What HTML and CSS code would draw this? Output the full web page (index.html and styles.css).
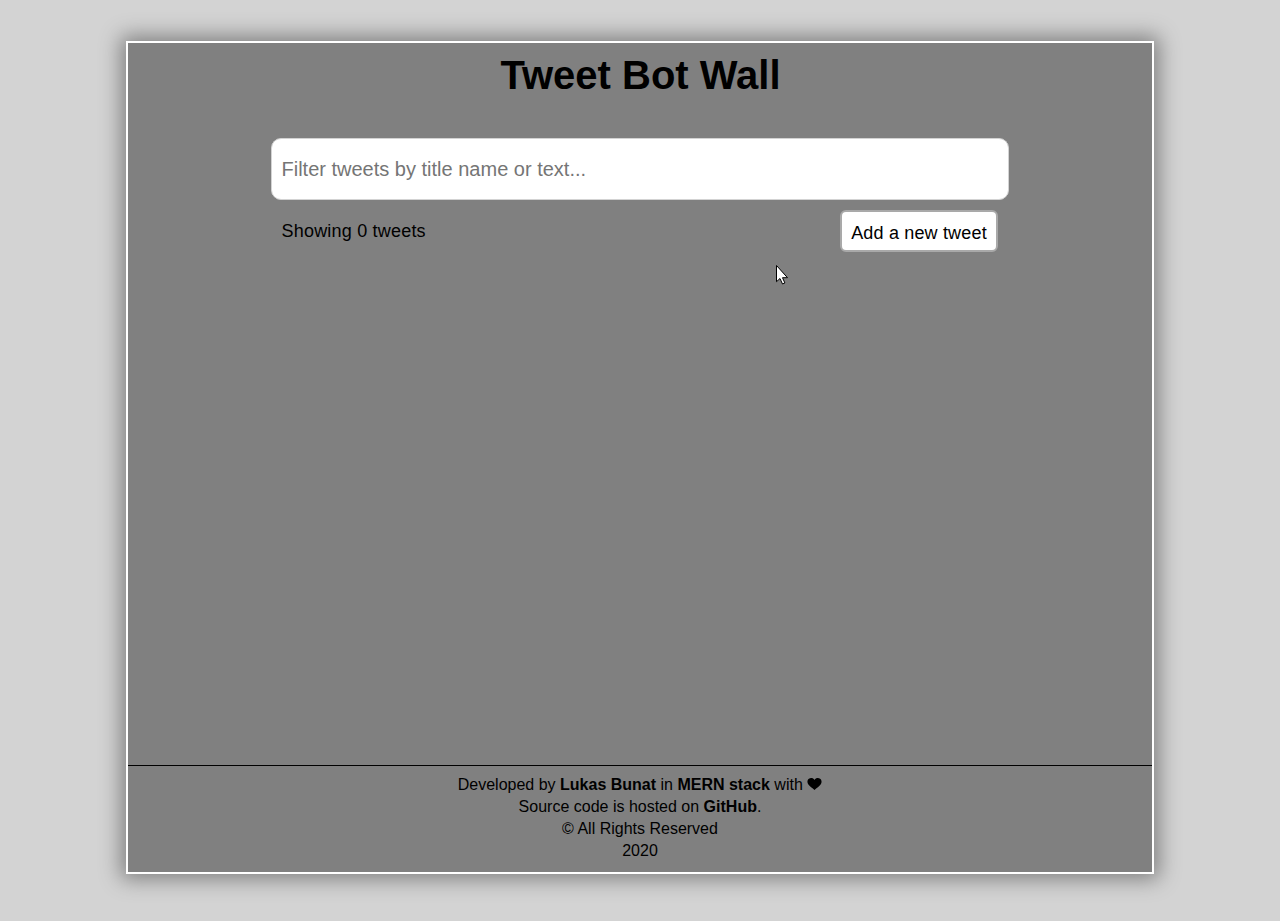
FILE: index.html
```html
<!DOCTYPE html>
<html lang="en">
<head>
<meta charset="utf-8">
<title>Tweet Bot Wall</title>
<link rel="stylesheet" href="styles.css">
</head>
<body>
<div class="wall">
  <h1 class="title">Tweet Bot Wall</h1>
  <main class="content">
    <input class="filter" type="text" placeholder="Filter tweets by title name or text...">
    <div class="toolbar">
      <span class="count">Showing 0 tweets</span>
      <button class="add" type="button">Add a new tweet</button>
    </div>
  </main>
  <footer class="footer">
    <div>Developed by <b>Lukas Bunat</b> in <b>MERN stack</b> with <svg class="heart" viewBox="0 0 15 12"><path d="M7.500 2C6.300-.2 3.600-.4 1.900.7.200 1.900 0 4.400 1.200 6.200 2.600 8.500 5.500 10 7.500 12c2-2 4.900-3.500 6.300-5.800C15 4.400 14.800 1.900 13.100.7 11.400-.4 8.700-.2 7.500 2z"/></svg></div>
    <div>Source code is hosted on <b>GitHub</b>.</div>
    <div>© All Rights Reserved</div>
    <div>2020</div>
  </footer>
</div>
<svg class="cursor" viewBox="0 0 13 21"><path d="M.5.5v16.200l3.500-3.200 2.500 5.500 2.400-1-2.400-5.300h5z"/></svg>
</body>
</html>
```
FILE: styles.css
```css
* { box-sizing: border-box; }
body {
  margin: 0;
  height: 921px;
  padding-top: 41px;
  background: lightgray;
  font-family: "Liberation Sans", Arial, sans-serif;
  color: #000;
  overflow: hidden;
}
.wall {
  width: 1028px;
  height: 833px;
  margin: 0 auto;
  display: flex;
  flex-direction: column;
  border: 2px solid #fff;
  background: gray;
  box-shadow: 0 0 20px 5px gray;
}
.title {
  margin: 0;
  padding: 9px 0 0 1px;
  height: 95px;
  font-size: 40px;
  line-height: 46px;
  text-align: center;
}
.content {
  width: 738px;
  margin: 0 auto;
  flex: 1;
}
.filter {
  display: block;
  width: 100%;
  height: 62px;
  padding: 0 9.5px;
  border: 1px solid #d3d3d3;
  border-radius: 10px;
  background: #fff;
  font: 20px "Liberation Sans", Arial, sans-serif;
}
.filter::placeholder { color: #757575; }
.toolbar {
  display: flex;
  justify-content: space-between;
  padding: 10px 11px 0 10.5px;
}
.count {
  font-size: 18px;
  line-height: 42px;
  letter-spacing: .2px;
}
.add {
  width: 158px;
  height: 42px;
  padding: 4px 0 0;
  border: 2px solid #a9a9a9;
  border-radius: 6px;
  background: #fff;
  color: #000;
  font: 18px "Liberation Sans", Arial, sans-serif;
  letter-spacing: .17px;
  white-space: nowrap;
}
.footer {
  height: 107px;
  padding-top: 8px;
  border-top: 1px solid #000;
  font-size: 16px;
  line-height: 22px;
  text-align: center;
}
.heart {
  width: 15px;
  height: 12px;
  vertical-align: 0;
}
.cursor {
  position: absolute;
  left: 776px;
  top: 265px;
  width: 13px;
  height: 21px;
  fill: #fff;
  stroke: #000;
  stroke-width: 1;
}
```
